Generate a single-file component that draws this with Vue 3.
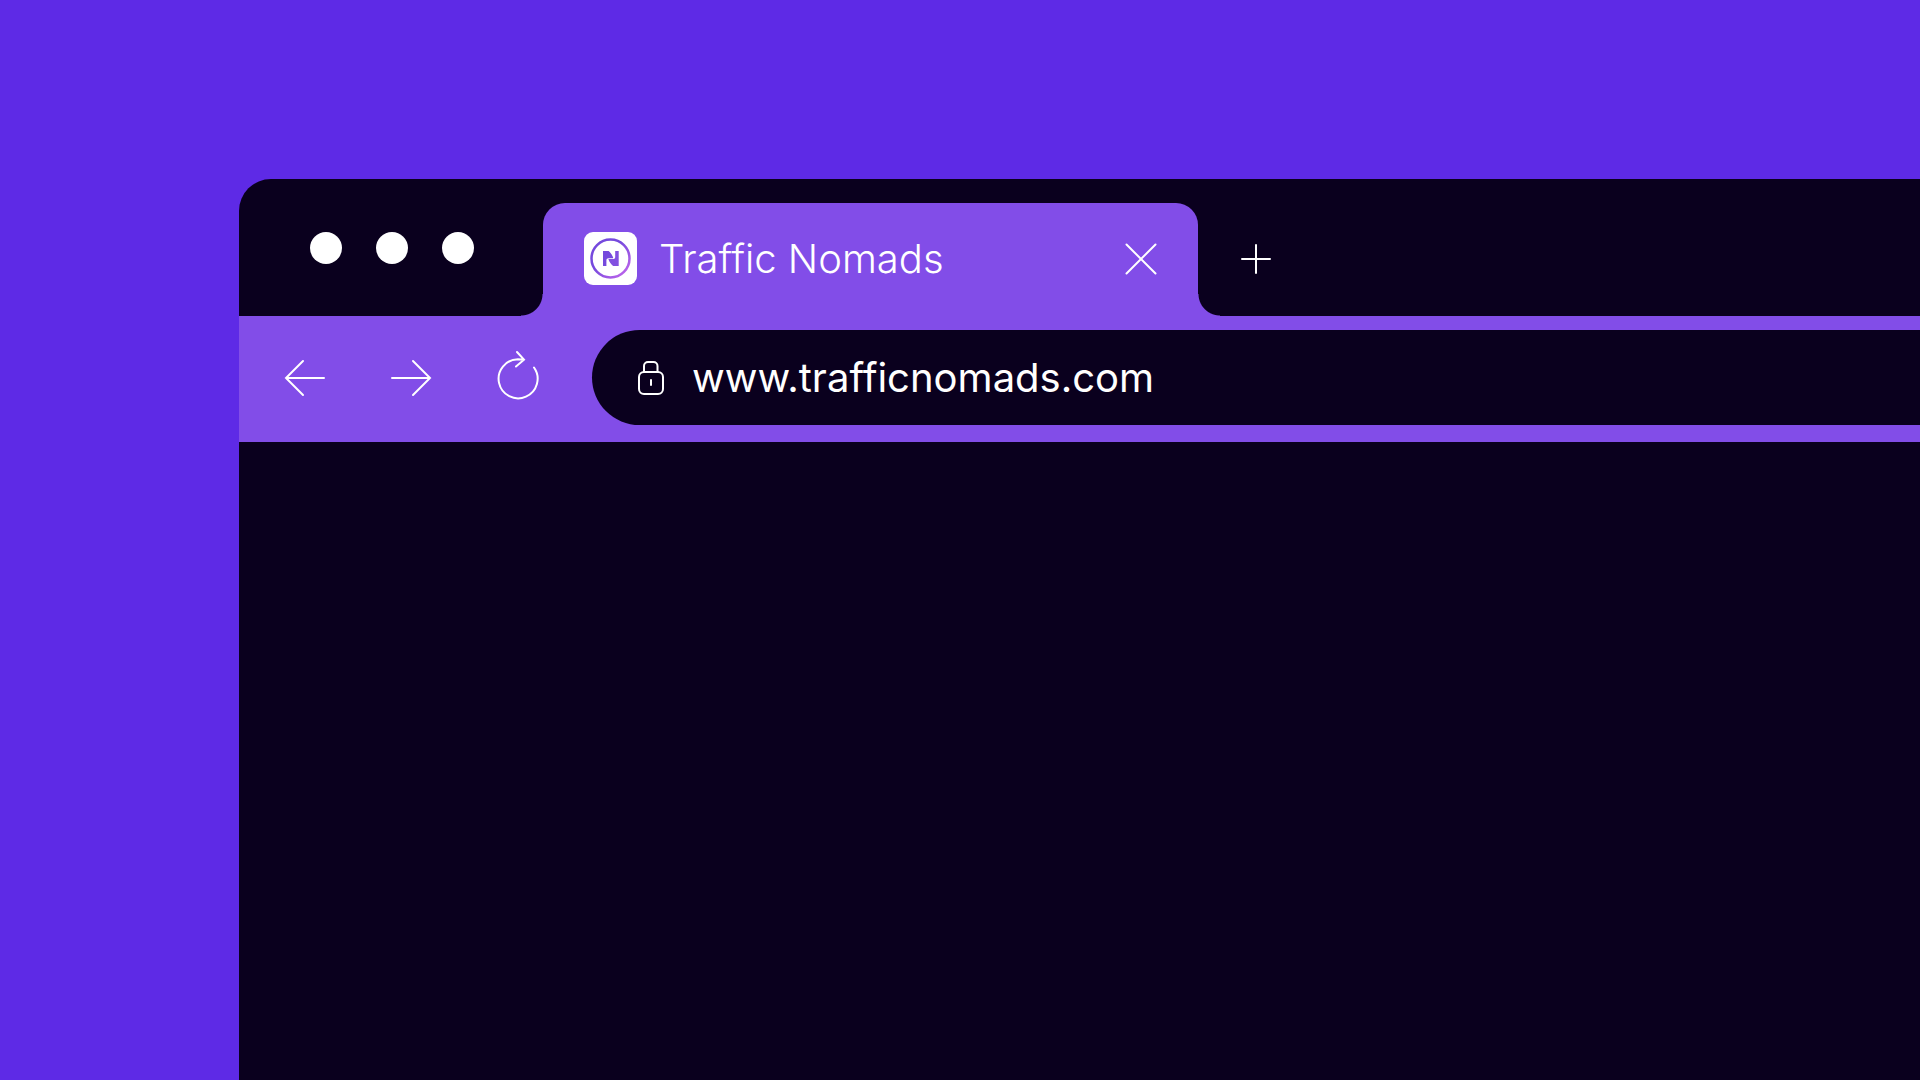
<template>
    <main class="page">
        <section class="browser">
            <header class="tabStrip">
                <div class="windowDots">
                    <button type="button" aria-label="Close window"></button>
                    <button type="button" aria-label="Minimize window"></button>
                    <button type="button" aria-label="Zoom window"></button>
                </div>
                <div class="tab">
                    <svg class="favicon" viewBox="0 0 53 53" aria-hidden="true">
                        <defs>
                            <linearGradient id="ring" x1="0" y1="0" x2="1" y2="1">
                                <stop offset="0.4" stop-color="#7549dd" />
                                <stop offset="1" stop-color="#c768ed" />
                            </linearGradient>
                        </defs>
                        <rect width="53" height="53" rx="9" fill="#fff" />
                        <circle cx="26.5" cy="26.5" r="19" fill="none" stroke="url(#ring)" stroke-width="2.5" />
                        <path d="M19 19h5.600c2.200 1.800 4 4.600 4.700 7.300H24.600c-1.400 0-2.200.8-2.200 2.200V34H19z" fill="#7549dd" />
                        <path d="M34.700 34h-5.600c-2.200-1.600-4-4.200-4.700-6.900h4.600c1.400 0 2.200-.8 2.200-2.200V19h3.500z" fill="#8250e0" />
                    </svg>
                    <h1>{{ title }}</h1>
                    <button class="closeTab" type="button" aria-label="Close tab">
                        <svg width="32" height="32" viewBox="0 0 32 32">
                            <path d="M1.500 1.500l29 29M30.500 1.500l-29 29" />
                        </svg>
                    </button>
                </div>
                <button class="newTab" type="button" aria-label="New tab">
                    <svg width="28" height="28" viewBox="0 0 28 28">
                        <path d="M14 0v28M0 14h28" />
                    </svg>
                </button>
            </header>
            <nav class="toolbar">
                <div class="controls">
                    <button type="button" aria-label="Back">
                        <svg width="40" height="50" viewBox="0 0 40 50">
                            <path d="M39 25H1M18 8L1 25l17 17" />
                        </svg>
                    </button>
                    <button type="button" aria-label="Forward">
                        <svg width="40" height="50" viewBox="0 0 40 50">
                            <path d="M1 25h38M22 8l17 17-17 17" />
                        </svg>
                    </button>
                    <button type="button" aria-label="Reload">
                        <svg width="42" height="50" viewBox="0 0 42 50">
                            <path d="M37 14.500A19.500 19.500 0 1 1 21 6.300L27 6.700M20 -1l7 7.700-8 6.800" />
                        </svg>
                    </button>
                </div>
                <label class="address">
                    <svg width="26" height="34" viewBox="0 0 26 34" aria-hidden="true">
                        <rect x="1" y="11" width="24" height="22" rx="5" />
                        <path d="M6 11V5a4 4 0 0 1 4-4h5.500a4 4 0 0 1 4 4v6M13 19v5" />
                    </svg>
                    <input v-model="url" type="text" aria-label="Address" spellcheck="false" />
                </label>
            </nav>
        </section>
    </main>
</template>

<script setup>
    import { ref } from 'vue';

    const title = ref('Traffic Nomads');
    const url = ref('www.trafficnomads.com');
</script>

<style>
    body {
        margin: 0;
        background-color: #5e2ae6;
    }
</style>

<style scoped>
    .page {
        display: flex;
        box-sizing: border-box;
        min-height: 100vh;
        padding: 179px 0 0 239px;
        overflow: hidden;
        background-color: #5e2ae6;
        color: #ffffff;
        font-family: Inter, "Liberation Sans", sans-serif;
    }

    .browser {
        flex: 1;
        min-width: 0;
        background-color: #0a001e;
        border-radius: 32px 0 0 0;
    }

    button {
        display: flex;
        flex: none;
        padding: 0;
        border: none;
        background: none;
        cursor: pointer;
    }

    svg {
        display: block;
        flex: none;
        overflow: visible;
    }

    button svg,
    .address svg {
        fill: none;
        stroke: #ffffff;
        stroke-width: 2px;
        stroke-linecap: round;
    }

    .tabStrip {
        display: flex;
        align-items: flex-end;
        height: 137px;
    }

    .windowDots {
        display: flex;
        align-self: center;
        gap: 34px;
        padding: 0 69px 0 71px;
    }

    .windowDots button {
        width: 32px;
        height: 32px;
        border-radius: 50%;
        background-color: #ffffff;
    }

    .tab {
        position: relative;
        display: flex;
        align-items: center;
        flex: 0 1 655px;
        box-sizing: border-box;
        height: 113px;
        padding: 0 41px 2px;
        background-color: #824de8;
        border-radius: 22px 22px 0 0;
    }

    /* rounded feet where the tab meets the toolbar */
    .tab::before,
    .tab::after {
        content: "";
        position: absolute;
        bottom: 0;
        width: 22px;
        height: 22px;
    }

    .tab::before {
        right: 100%;
        background: radial-gradient(circle at 0 0, transparent 21px, #824de8 22px);
    }

    .tab::after {
        left: 100%;
        background: radial-gradient(circle at 100% 0, transparent 21px, #824de8 22px);
    }

    .favicon {
        width: 53px;
        height: 53px;
    }

    .tab h1 {
        flex: 1;
        margin: 0 0 0 22px;
        font-size: 40px;
        font-weight: 300;
        line-height: 48px;
        white-space: nowrap;
    }

    .newTab {
        margin: 0 0 43px 44px;
    }

    .toolbar {
        display: flex;
        align-items: center;
        box-sizing: border-box;
        height: 126px;
        padding-bottom: 3px;
        background-color: #824de8;
    }

    .controls {
        display: flex;
        gap: 66px;
        padding: 0 53px 0 46px;
    }

    .address {
        display: flex;
        align-items: center;
        flex: 1;
        gap: 28px;
        box-sizing: border-box;
        min-width: 0;
        height: 95px;
        padding-left: 46px;
        background-color: #0a001e;
        border-radius: 48px 0 0 48px;
    }

    .address input {
        flex: 1;
        min-width: 0;
        padding: 0;
        border: none;
        outline: none;
        background: none;
        color: #ffffff;
        font-family: inherit;
        font-size: 40px;
        font-weight: 400;
        line-height: 48px;
    }
</style>
